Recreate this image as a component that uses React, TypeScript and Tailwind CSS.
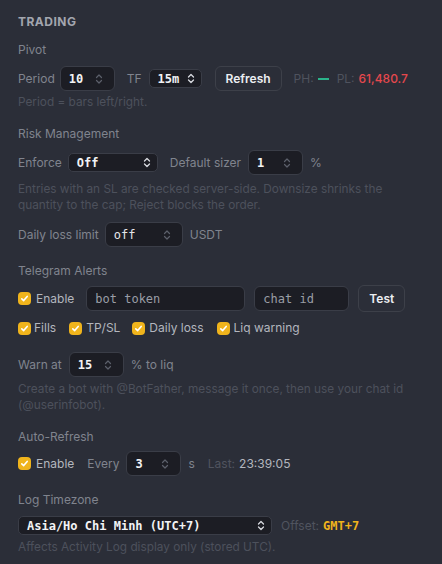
import type { ReactNode } from "react";

const mono = "font-['DejaVu_Sans_Mono',monospace]";

// faded up/down arrows of a number field
const Spin = () => (
  <svg width="8" height="12" viewBox="0 0 8 12" fill="none" stroke="#5c606b" strokeWidth="1.2" strokeLinecap="round" strokeLinejoin="round">
    <path d="M1.5 4.5 4 2l2.5 2.5" />
    <path d="M1.5 7.5 4 10l2.5-2.5" />
  </svg>
);

// brighter chevrons of a select
const Chev = () => (
  <svg width="8" height="11" viewBox="0 0 8 11" fill="none" stroke="#d8dae0" strokeWidth="1.3" strokeLinecap="round" strokeLinejoin="round">
    <path d="M1.5 4 4 1.5 6.5 4" />
    <path d="M1.5 7 4 9.5 6.5 7" />
  </svg>
);

const NumInput = ({ value, w, bold = true }: { value: string; w: string; bold?: boolean }) => (
  <div className={`${w} h-[25px] shrink-0 rounded-[6px] border border-[#3a3d47] bg-[#1c1d24] flex items-center justify-between pl-[8px] pr-[11px]`}>
    <span className={`${mono} text-[12px] ${bold ? "font-bold text-[#f2f3f5]" : "text-[#e4e5e9]"}`}>{value}</span>
    <Spin />
  </div>
);

const Select = ({ value, w }: { value: string; w: string }) => (
  <div className={`${w} h-[19px] shrink-0 rounded-[5px] border border-[#3a3d47] bg-[#1c1d24] flex items-center justify-between pl-[8px] pr-[6px]`}>
    <span className={`${mono} text-[12px] font-bold text-[#f2f3f5] leading-none`}>{value}</span>
    <Chev />
  </div>
);

const Check = () => (
  <span className="w-[13px] h-[13px] shrink-0 rounded-[4px] bg-[#f0b41c] flex items-center justify-center">
    <svg width="9" height="9" viewBox="0 0 9 9" fill="none" stroke="#fff" strokeWidth="1.6" strokeLinecap="round" strokeLinejoin="round">
      <path d="M1.8 4.8 3.7 6.6 7.2 2.4" />
    </svg>
  </span>
);

const Title = ({ children, className = "" }: { children: ReactNode; className?: string }) => (
  <div className={`text-[12px] leading-4 text-[#80848e] ${className}`}>{children}</div>
);

const Hint = ({ children, className = "" }: { children: ReactNode; className?: string }) => (
  <div className={`text-[11.8px] leading-4 text-[#4d515c] ${className}`}>{children}</div>
);

const Btn = ({ children, h }: { children: ReactNode; h: string }) => (
  <div className={`${h} shrink-0 rounded-[6px] border border-[#3d4049] bg-[#2b2e38] px-[10px] flex items-center text-[12px] font-semibold text-[#eceef2]`}>
    {children}
  </div>
);

export default function App() {
  return (
    <div className="w-[442px] h-[564px] overflow-hidden bg-[#2b2e38] pl-[18px] pt-[14px] font-['Inter',sans-serif] text-[12px] text-[#80848e]">
      <div className="text-[12px] leading-4 font-bold tracking-[0.04em] text-[#a3a6af]">TRADING</div>

      {/* Pivot */}
      <Title className="mt-[12px]">Pivot</Title>
      <div className="mt-[8px] flex items-center h-[25px]">
        <span>Period</span>
        <div className="ml-[5px]"><NumInput value="10" w="w-[55px]" /></div>
        <span className="ml-[12px]">TF</span>
        <div className="ml-[7px]"><Select value="15m" w="w-[53px]" /></div>
        <div className="ml-[13px]"><Btn h="h-[25px]">Refresh</Btn></div>
        <span className="ml-[12px] text-[#4f535e]">PH:</span>
        <span className="ml-[4px] w-[11px] h-[2px] bg-[#2bb38a]" />
        <span className="ml-[8px] text-[#4f535e]">PL:</span>
        <span className="ml-[4px] font-medium text-[#e5484d]">61,480.7</span>
      </div>
      <Hint className="mt-[3px]">Period = bars left/right.</Hint>

      {/* Risk */}
      <Title className="mt-[16px]">Risk Management</Title>
      <div className="mt-[8px] flex items-center h-[25px]">
        <span>Enforce</span>
        <div className="ml-[6px]"><Select value="Off" w="w-[90px]" /></div>
        <span className="ml-[12px]">Default sizer</span>
        <div className="ml-[7px]"><NumInput value="1" w="w-[55px]" /></div>
        <span className="ml-[7px]">%</span>
      </div>
      <Hint className="mt-[6px] w-[400px]">
        Entries with an SL are checked server-side. Downsize shrinks the quantity to the cap; Reject blocks the order.
      </Hint>
      <div className="mt-[9px] flex items-center h-[25px]">
        <span>Daily loss limit</span>
        <div className="ml-[6px]"><NumInput value="off" w="w-[78px]" bold={false} /></div>
        <span className="ml-[7px]">USDT</span>
      </div>

      {/* Telegram */}
      <Title className="mt-[16px]">Telegram Alerts</Title>
      <div className="mt-[6px] flex items-center h-[27px]">
        <Check />
        <span className="ml-[5px] text-[#b3b6be]">Enable</span>
        <div className={`ml-[12px] w-[159px] h-[25px] rounded-[6px] border border-[#3a3d47] bg-[#1c1d24] pl-[8px] flex items-center ${mono} text-[12px] text-[#9a9da6]`}>bot token</div>
        <div className={`ml-[9px] w-[95px] h-[25px] rounded-[6px] border border-[#3a3d47] bg-[#1c1d24] pl-[8px] flex items-center ${mono} text-[12px] text-[#9a9da6]`}>chat id</div>
        <div className="ml-[9px]"><Btn h="h-[27px]">Test</Btn></div>
      </div>
      <div className="mt-[8px] flex items-center h-4 text-[#b3b6be]">
        <Check />
        <span className="ml-[3px]">Fills</span>
        <span className="ml-[13px]"><Check /></span>
        <span className="ml-[4px]">TP/SL</span>
        <span className="ml-[12px]"><Check /></span>
        <span className="ml-[4px]">Daily loss</span>
        <span className="ml-[13px]"><Check /></span>
        <span className="ml-[4px]">Liq warning</span>
      </div>
      <div className="mt-[16px] flex items-center h-[25px]">
        <span>Warn at</span>
        <div className="ml-[7px]"><NumInput value="15" w="w-[55px]" /></div>
        <span className="ml-[7px]">% to liq</span>
      </div>
      <Hint className="mt-[4px] w-[412px]">
        Create a bot with @BotFather, message it once, then use your chat id (@userinfobot).
      </Hint>

      {/* Auto refresh */}
      <Title className="mt-[16px]">Auto-Refresh</Title>
      <div className="mt-[6px] flex items-center h-[25px]">
        <Check />
        <span className="ml-[5px] text-[#b3b6be]">Enable</span>
        <span className="ml-[13px]">Every</span>
        <div className="ml-[7px]"><NumInput value="3" w="w-[55px]" /></div>
        <span className="ml-[7px]">s</span>
        <span className="ml-[13px] text-[#50545f]">Last:</span>
        <span className="ml-[4px] text-[#b3b6be]">23:39:05</span>
      </div>

      {/* Timezone */}
      <Title className="mt-[16px]">Log Timezone</Title>
      <div className="mt-[8px] flex items-center h-[19px]">
        <Select value="Asia/Ho Chi Minh (UTC+7)" w="w-[254px]" />
        <span className="ml-[9px] text-[#50545f]">Offset:</span>
        <span className={`ml-[4px] ${mono} text-[12px] font-bold text-[#f0b41c]`}>GMT+7</span>
      </div>
      <Hint className="mt-[4px]">Affects Activity Log display only (stored UTC).</Hint>
    </div>
  );
}
